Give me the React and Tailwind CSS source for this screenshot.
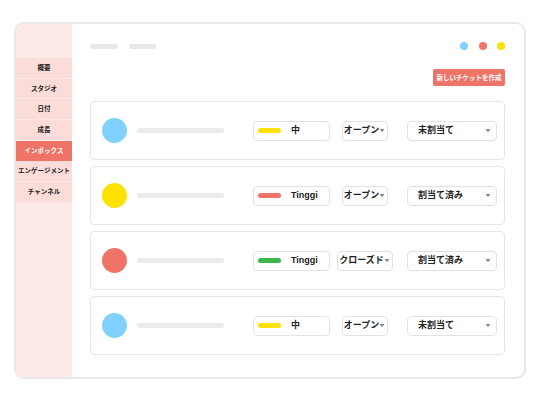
import React from "react";

const font = { fontFamily: '"Liberation Sans", "Noto Sans CJK JP", sans-serif' };

const navItems = ["概要", "スタジオ", "日付", "成長", "インボックス", "エンゲージメント", "チャンネル"];

const rows = [
  { circle: "bg-[#80d1fd]", pill: "bg-[#ffe100]", prio: "中", status: "オープン", assignee: "未割当て" },
  { circle: "bg-[#ffe100]", pill: "bg-[#f07367]", prio: "Tinggi", status: "オープン", assignee: "割当て済み" },
  { circle: "bg-[#f07367]", pill: "bg-[#3db54a]", prio: "Tinggi", status: "クローズド", assignee: "割当て済み" },
  { circle: "bg-[#80d1fd]", pill: "bg-[#ffe100]", prio: "中", status: "オープン", assignee: "未割当て" },
];

function Arrow() {
  return (
    <svg width="6" height="5" viewBox="0 0 6 5" className="shrink-0">
      <path d="M0.5 1 L5.5 1 L3 4.2 Z" fill="#8a8a8a" />
    </svg>
  );
}

function Row({ r }) {
  return (
    <div className="h-[59px] border border-[#e6e6e6] rounded-[4px] flex items-center pl-[11px]">
      <div className={`w-[25px] h-[25px] rounded-full ${r.circle}`} />
      <div className="ml-[10px] w-[87px] h-[5px] rounded-full bg-[#ebebeb]" />
      <div className="ml-[29px] w-[77px] h-[20px] border border-[#e2e2e2] rounded-[4px] flex items-center pl-[4px]">
        <div className={`w-[23px] h-[5px] rounded-full ${r.pill}`} />
        <span className="ml-[10px] text-[9px] font-bold text-[#222]">{r.prio}</span>
      </div>
      <div className="w-[70px] flex justify-center">
        <div className="h-[20px] border border-[#e2e2e2] rounded-[4px] flex items-center pl-px pr-[2px]">
          <span className="text-[9px] font-bold text-[#222] leading-none">{r.status}</span>
          <Arrow />
        </div>
      </div>
      <div className="ml-[7px] w-[90px] h-[20px] border border-[#e2e2e2] rounded-[4px] flex items-center justify-between pl-[10px] pr-[5px]">
        <span className="text-[9px] font-bold text-[#222] leading-none">{r.assignee}</span>
        <Arrow />
      </div>
    </div>
  );
}

export default function App() {
  return (
    <div className="w-[540px] h-[400px] bg-white pt-[22px] pl-[14px]" style={font}>
      <div className="w-[512px] h-[357px] border-2 border-[#e8e8e8] rounded-[10px] overflow-hidden flex">
        <div className="w-[56px] h-full bg-[#fdeae8] flex flex-col">
          <div className="h-[34px]" />
          {navItems.map((n) => (
            <div
              key={n}
              className={
                n === "インボックス"
                  ? "h-[20.7px] flex items-center justify-center bg-[#f07367] text-white text-[6.5px] font-bold whitespace-nowrap"
                  : "h-[20.7px] flex items-center justify-center bg-[#fcdcd8] border-b border-[#fde9e6] text-[#222] text-[6.5px] font-bold whitespace-nowrap"
              }
            >
              {n}
            </div>
          ))}
        </div>
        <div className="flex-1 pl-[18px] pr-[19px] pt-[18px] flex flex-col">
          <div className="h-[8px] flex items-center">
            <div className="w-[28px] h-[5px] rounded-full bg-[#e8e8e8]" />
            <div className="ml-[11px] w-[27px] h-[5px] rounded-full bg-[#e8e8e8]" />
            <div className="ml-auto flex gap-[10.5px]">
              <div className="w-[8px] h-[8px] rounded-full bg-[#80d1fd]" />
              <div className="w-[8px] h-[8px] rounded-full bg-[#f07367]" />
              <div className="w-[8px] h-[8px] rounded-full bg-[#ffe100]" />
            </div>
          </div>
          <div className="mt-[19px] flex justify-end">
            <div className="h-[17px] w-[72px] bg-[#f07367] rounded-[2px] flex items-center justify-center text-white text-[6.5px] font-bold whitespace-nowrap">
              新しいチケットを作成
            </div>
          </div>
          <div className="mt-[15px] flex flex-col gap-[6px]">
            {rows.map((r, i) => (
              <Row key={i} r={r} />
            ))}
          </div>
        </div>
      </div>
    </div>
  );
}
